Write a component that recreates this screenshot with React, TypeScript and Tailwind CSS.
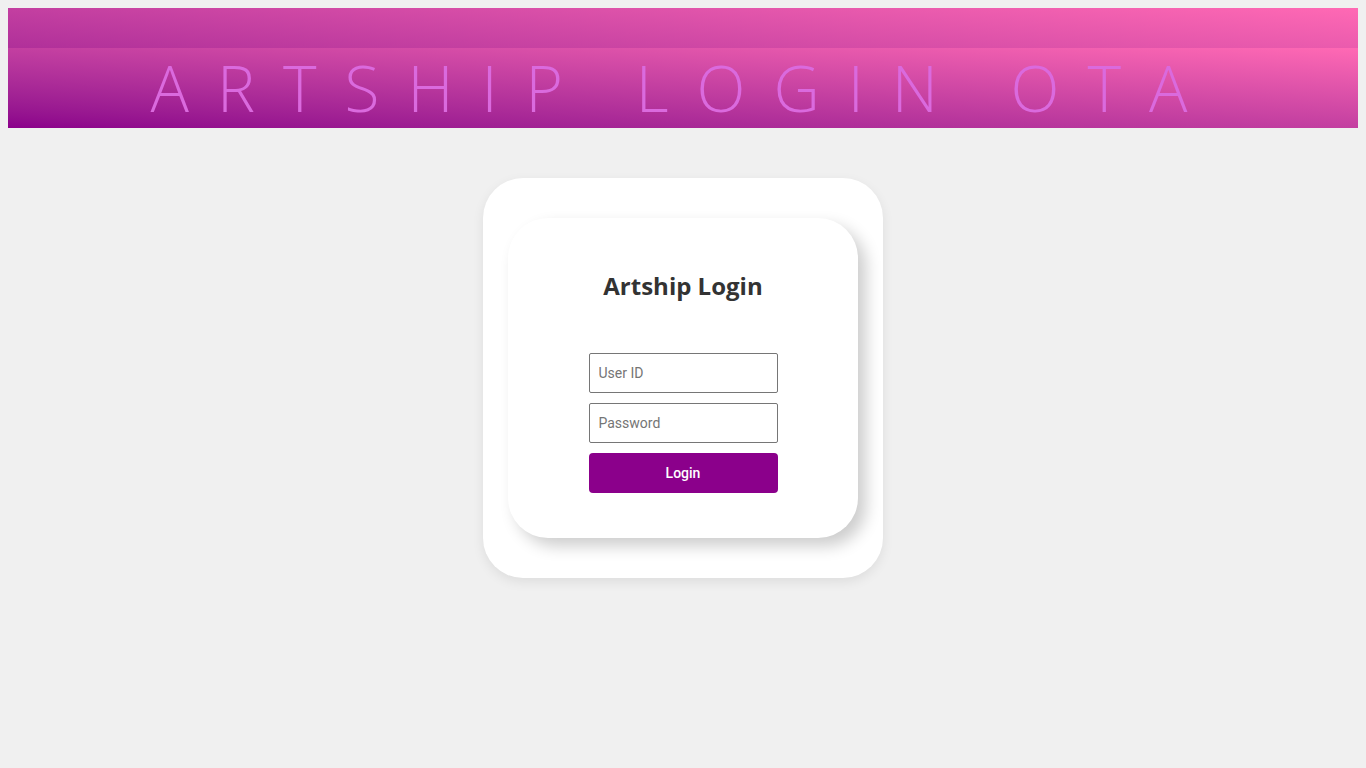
function App() {
  return (
    <div className="min-h-screen bg-[#f0f0f0] p-2 font-['Open_Sans',sans-serif]">
      {/* Cabeçalho */}
      <header className="h-[120px] pt-10 bg-gradient-to-tr from-[#8b008b] to-[#ff69b4]">
        <div className="h-20 flex items-center justify-center bg-gradient-to-tr from-[#8b008b] to-[#ff69b4]">
          <h1 className="text-[64px] font-light leading-none tracking-[28px] text-[#da6ade] whitespace-nowrap">
            ARTSHIP LOGIN OTA
          </h1>
        </div>
      </header>

      {/* Cartão de login */}
      <main className="flex justify-center mt-[50px]">
        <div className="w-[400px] h-[400px] bg-white rounded-[40px] shadow-[0_4px_12px_rgba(0,0,0,0.08)] flex items-center justify-center">
          <div className="w-[350px] h-[320px] bg-white rounded-[40px] shadow-[8px_8px_16px_rgba(0,0,0,0.2)] flex flex-col items-center pt-[51px]">
            <h2 className="text-2xl font-bold text-[#333] leading-[33px]">Artship Login</h2>

            <form className="flex flex-col gap-[10px] w-[189px] mt-[51px] font-['Roboto',sans-serif]">
              <input
                type="text"
                placeholder="User ID"
                className="h-10 border border-[#767676] rounded-[2px] px-[9px] text-sm text-[#333] placeholder:text-[#757575] outline-none"
              />
              <input
                type="password"
                placeholder="Password"
                className="h-10 border border-[#767676] rounded-[2px] px-[9px] text-sm text-[#333] placeholder:text-[#757575] outline-none"
              />
              <button
                type="submit"
                className="h-10 rounded bg-[#8b008b] text-white text-sm font-medium"
              >
                Login
              </button>
            </form>
          </div>
        </div>
      </main>
    </div>
  );
}

export default App;
